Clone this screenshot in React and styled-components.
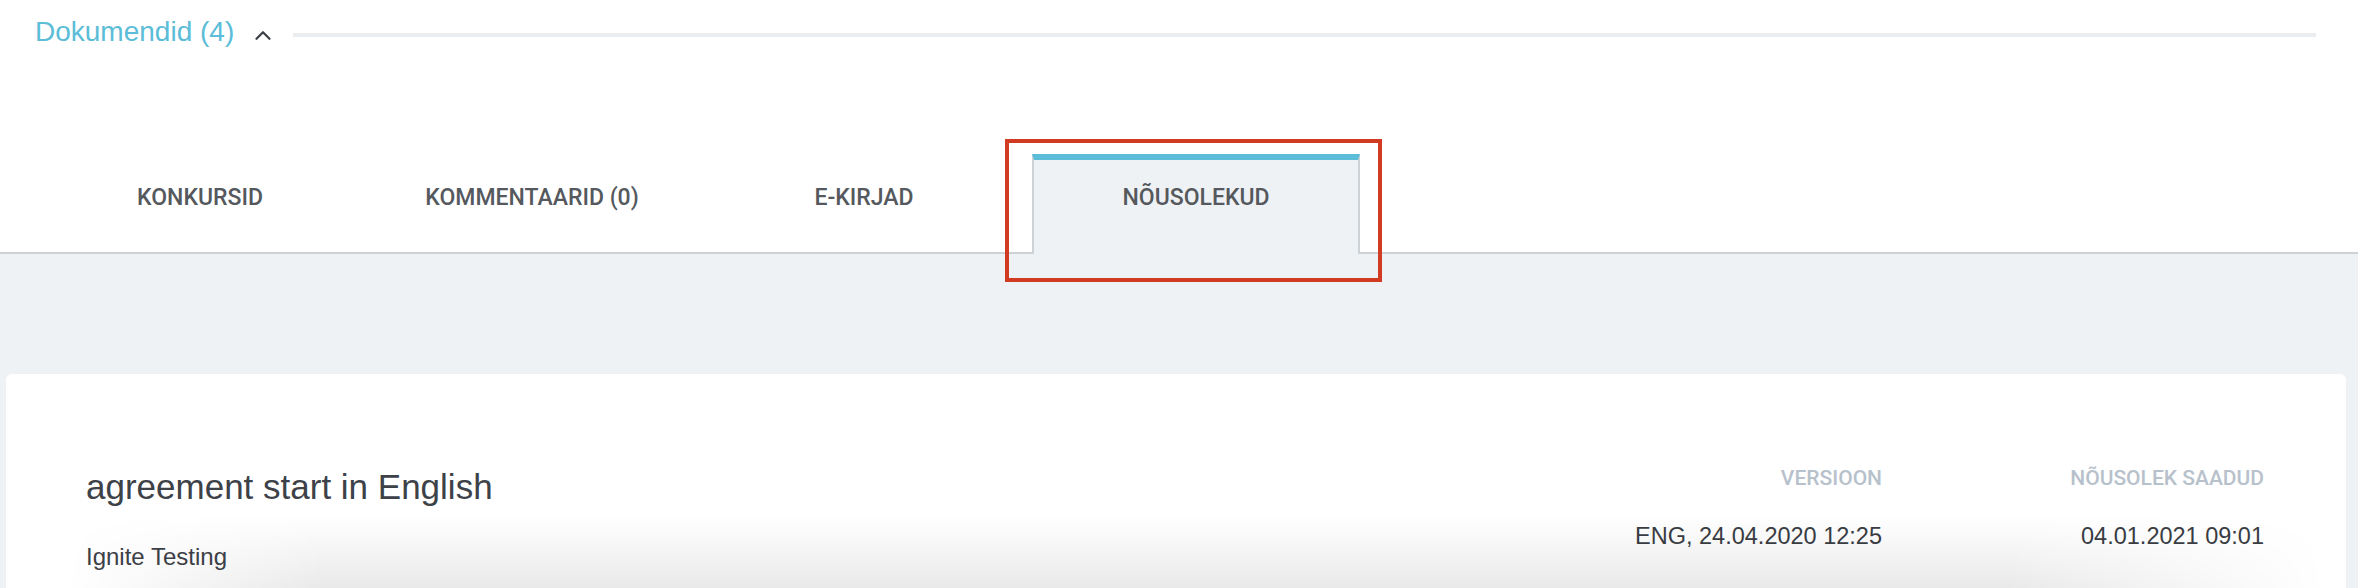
import React from "react";
import styled, { createGlobalStyle } from "styled-components";

const GlobalStyle = createGlobalStyle`
  html, body { margin: 0; padding: 0; background: #ffffff; }
  body { font-family: "Liberation Sans", Arial, sans-serif; }
  * { box-sizing: border-box; }
`;

const Page = styled.div`
  width: 2358px;
  height: 588px;
  overflow: hidden;
  display: flex;
  flex-direction: column;
  background: #ffffff;
`;

const SectionHeader = styled.div`
  display: flex;
  align-items: center;
  padding: 16px 42px 0 35px;
`;

const SectionTitle = styled.span`
  font-size: 28px;
  line-height: 32px;
  color: #5bbdd8;
  white-space: nowrap;
`;

const Chevron = styled.svg`
  flex: none;
  width: 16px;
  height: 10px;
  margin: 6px 22px 0 21px;
`;

const Rule = styled.div`
  flex: 1;
  height: 4px;
  margin-top: 6px;
  background: #ebeef1;
`;

const TabBar = styled.div`
  display: flex;
  gap: 4px;
  margin-top: 106px;
  padding-left: 36px;
  border-bottom: 2px solid #cdd2d7;
`;

const Tab = styled.div`
  position: relative;
  width: 328px;
  height: 100px;
  margin-bottom: -2px;
  padding-top: 25px;
  display: flex;
  justify-content: center;
  font-family: Roboto, "Liberation Sans", sans-serif;
  font-size: 23px;
  line-height: 25px;
  font-weight: 500;
  color: #55595e;
  border-top: 6px solid ${(p) => (p.$active ? "#5bbdd8" : "transparent")};
  border-left: 2px solid ${(p) => (p.$active ? "#cdd2d7" : "transparent")};
  border-right: 2px solid ${(p) => (p.$active ? "#cdd2d7" : "transparent")};
  background: ${(p) => (p.$active ? "#eff2f5" : "transparent")};
  z-index: ${(p) => (p.$active ? 1 : 0)};
`;

const Highlight = styled.span`
  position: absolute;
  left: -29px;
  top: -21px;
  width: 377px;
  height: 143px;
  border: 4px solid #d13b22;
  pointer-events: none;
`;

const Content = styled.div`
  flex: 1;
  background: #eff2f5;
  padding: 120px 12px 0 6px;
  display: flex;
  flex-direction: column;
`;

const Card = styled.div`
  position: relative;
  overflow: hidden;
  height: 214px;
  background: #ffffff;
  border-radius: 6px 6px 0 0;
  padding: 92px 82px 0 80px;
  display: grid;
  grid-template-columns: 1fr 382px 382px;
  align-items: start;

  &::after {
    content: "";
    position: absolute;
    left: 0;
    right: 0;
    bottom: 0;
    height: 72px;
    pointer-events: none;
    background: linear-gradient(to bottom, rgba(0, 0, 0, 0), rgba(0, 0, 0, 0.085));
    -webkit-mask-image: linear-gradient(to right, transparent 60px, #000 320px, #000 2000px, transparent 2320px);
    mask-image: linear-gradient(to right, transparent 60px, #000 320px, #000 2000px, transparent 2320px);
  }
`;

const MainCol = styled.div`
  display: flex;
  flex-direction: column;
`;

const AgreementTitle = styled.div`
  font-size: 35px;
  line-height: 42px;
  color: #3d4148;
`;

const AgreementSub = styled.div`
  margin-top: 35px;
  font-size: 24px;
  line-height: 28px;
  color: #3d4148;
`;

const InfoCol = styled.div`
  display: flex;
  flex-direction: column;
  align-items: flex-end;
  text-align: right;
`;

const InfoLabel = styled.div`
  font-family: Roboto, "Liberation Sans", sans-serif;
  font-size: 21px;
  line-height: 24px;
  font-weight: 500;
  color: #b7c1cb;
  white-space: nowrap;
`;

const InfoValue = styled.div`
  margin-top: 32px;
  font-size: 23.5px;
  line-height: 28px;
  color: #3a3e44;
  white-space: nowrap;
`;

const tabs = ["KONKURSID", "KOMMENTAARID (0)", "E-KIRJAD", "NÕUSOLEKUD"];

export default function App() {
  return (
    <Page>
      <GlobalStyle />
      <SectionHeader>
        <SectionTitle>Dokumendid (4)</SectionTitle>
        <Chevron viewBox="0 0 16 10" fill="none">
          <polyline points="1.5,8.8 8,2.2 14.5,8.8" stroke="#3c4046" strokeWidth="2.2" strokeLinecap="round" strokeLinejoin="round" />
        </Chevron>
        <Rule />
      </SectionHeader>
      <TabBar>
        {tabs.map((t, i) => (
          <Tab key={t} $active={i === 3}>
            {t}
            {i === 3 && <Highlight />}
          </Tab>
        ))}
      </TabBar>
      <Content>
        <Card>
          <MainCol>
            <AgreementTitle>agreement start in English</AgreementTitle>
            <AgreementSub>Ignite Testing</AgreementSub>
          </MainCol>
          <InfoCol>
            <InfoLabel>VERSIOON</InfoLabel>
            <InfoValue>ENG, 24.04.2020 12:25</InfoValue>
          </InfoCol>
          <InfoCol>
            <InfoLabel>NÕUSOLEK SAADUD</InfoLabel>
            <InfoValue>04.01.2021 09:01</InfoValue>
          </InfoCol>
        </Card>
      </Content>
    </Page>
  );
}
